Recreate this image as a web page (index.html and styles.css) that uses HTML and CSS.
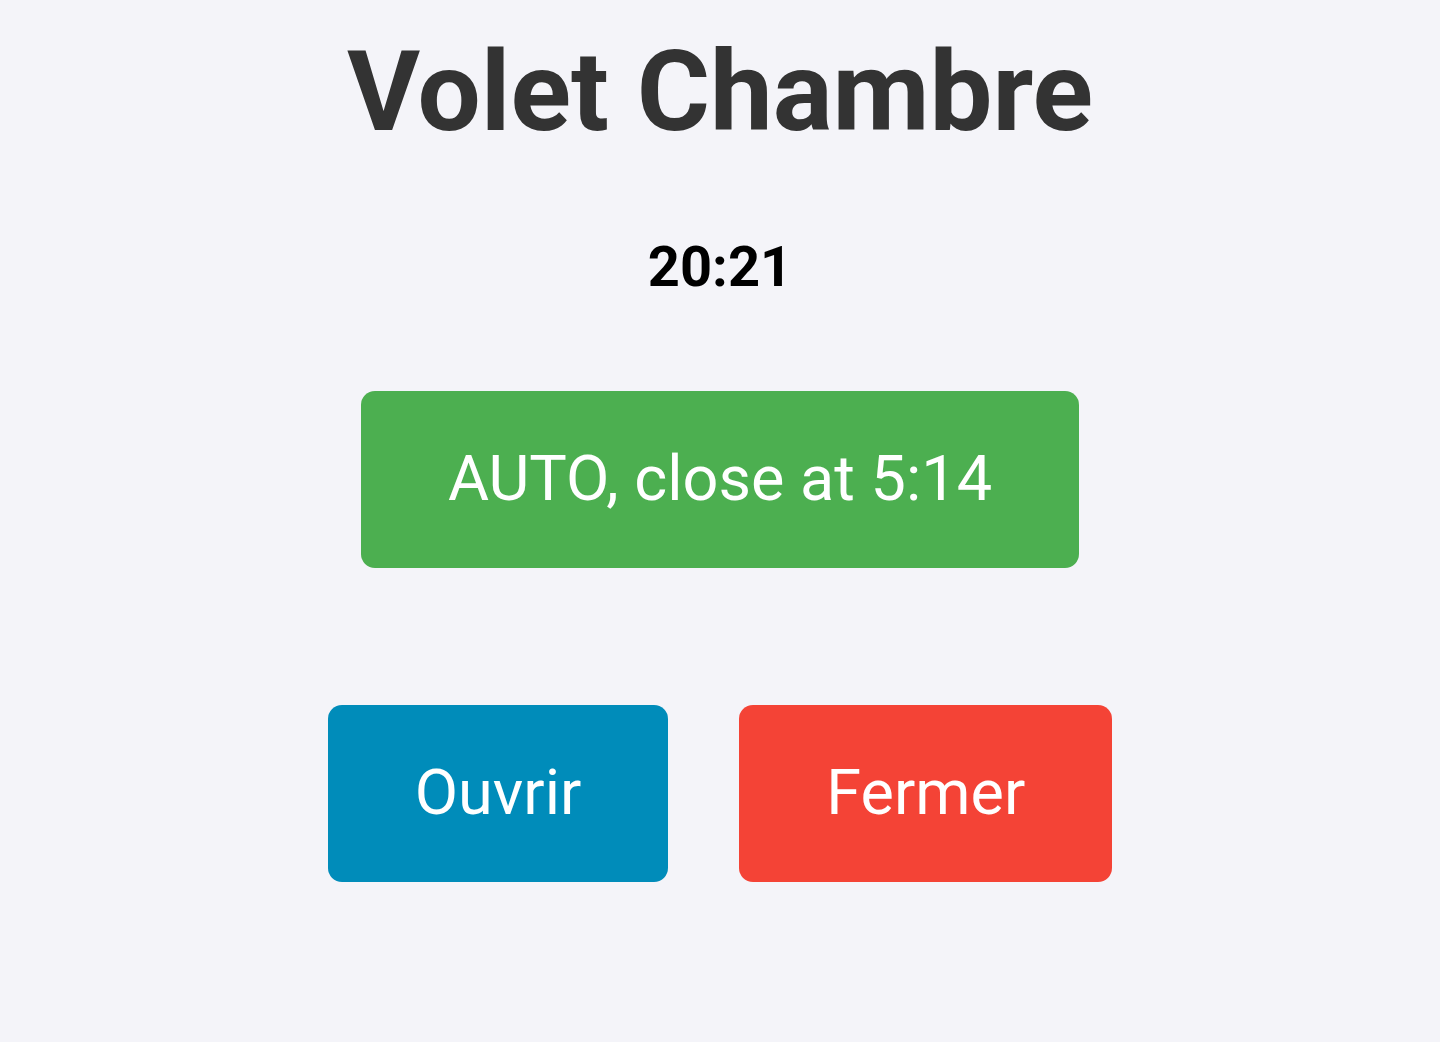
FILE: index.html
```html
<!DOCTYPE html>
<html lang="fr">
<head>
  <meta charset="UTF-8">
  <meta name="viewport" content="width=device-width, initial-scale=1">
  <title>Volet Chambre</title>
  <link rel="stylesheet" href="styles.css">
</head>
<body>

  <div class="page">
    <h1 class="title">Volet Chambre</h1>
    <div class="clock" id="clock">20:21</div>

    <button class="btn btn-auto" id="modeBtn">AUTO, close at 5:14</button>

    <div class="controls">
      <button class="btn btn-open">Ouvrir</button>
      <button class="btn btn-close">Fermer</button>
    </div>
  </div>

</body>
</html>
```

FILE: styles.css
```css
body {
  font-family: Roboto, 'Liberation Sans', sans-serif;
  margin: 0;
  background: #f4f4f9;
}
.page {
  display: flex;
  flex-direction: column;
  align-items: center;
  padding-top: 25px;
}
.title {
  margin: 0;
  font-size: 112px;
  line-height: 1.2;
  font-weight: 700;
  color: #333333;
}
.clock {
  margin-top: 75px;
  font-size: 56px;
  line-height: 1.2;
  font-weight: 700;
  color: #000000;
}
.btn {
  font-family: inherit;
  font-size: 63px;
  line-height: 76px;
  padding: 50px 87px 51px;
  border: none;
  border-radius: 14px;
  color: #ffffff;
  cursor: pointer;
}
.btn-auto {
  margin-top: 89px;
  background-color: #4caf50;
}
.controls {
  display: flex;
  gap: 71px;
  margin-top: 137px;
}
.btn-open {
  background-color: #008cba;
}
.btn-close {
  background-color: #f44336;
}
```
